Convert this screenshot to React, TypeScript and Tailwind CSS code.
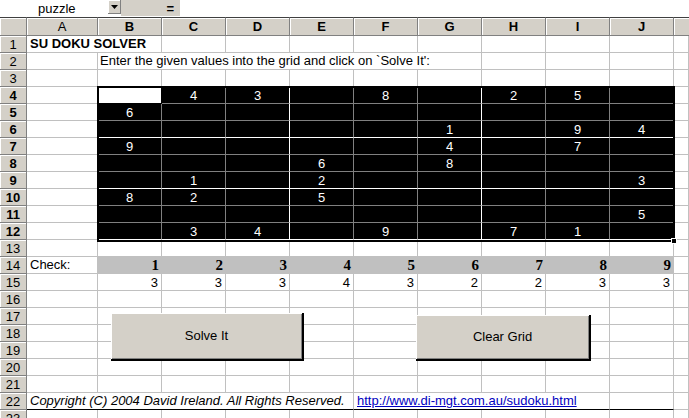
import React from 'react';

const font = "font-['Liberation_Sans',Arial,sans-serif]";
const colLetters = ['A', 'B', 'C', 'D', 'E', 'F', 'G', 'H', 'I', 'J'];

// rows 4..12, columns B..J
const puzzle = [
  ' 43 8 25 ',
  '6        ',
  '     1 94',
  '9    4 7 ',
  '   6 8   ',
  ' 1 2    3',
  '82 5     ',
  '        5',
  ' 34 9 71 ',
];
const checkCounts = [3, 3, 3, 4, 3, 2, 2, 3, 3];

const gridLine = 'border-r border-b border-[#c0c0c0]';

const RowHead = ({ n, bold }: { n: number; bold?: boolean }) => (
  <div
    className={`flex items-center justify-center bg-[#d4d0c8] border-r border-b border-[#808080] shadow-[inset_1px_1px_0_#fff] leading-none ${
      bold ? 'font-bold' : ''
    }`}
  >
    {n}
  </div>
);

const Blank = ({ extra = '' }: { extra?: string }) => <div className={`${gridLine} ${extra}`} />;

const blanks = (count: number, key: string) =>
  Array.from({ length: count }, (_, i) => <Blank key={`${key}-${i}`} />);

function SudokuCell({ r, c, v }: { r: number; c: number; v: string }) {
  const active = r === 0 && c === 0;
  const right = c === 2 || c === 5 || c === 8 ? 'border-r-white' : 'border-r-[#808080]';
  const bottom = r === 2 || r === 5 || r === 8 ? 'border-b-white' : 'border-b-[#808080]';
  if (active) {
    return <div className="bg-white border-r border-b border-r-black border-b-black" />;
  }
  return (
    <div className={`flex items-center justify-center bg-black text-white border-r border-b ${right} ${bottom} leading-none`}>
      {v.trim()}
    </div>
  );
}

function Button({ label, className }: { label: string; className: string }) {
  return (
    <div
      className={`absolute flex items-center justify-center bg-[#d4d0c8] text-black border-r-2 border-b-2 border-r-black border-b-black shadow-[inset_1px_1px_0_#fff,inset_-1px_-1px_0_#808080] ${className}`}
    >
      {label}
    </div>
  );
}

export default function App() {
  const rows: React.ReactNode[] = [];

  // column header row
  rows.push(
    <div key="corner" className="bg-[#d4d0c8] border-t border-t-[#404040] border-r border-b border-r-[#808080] border-b-[#808080] shadow-[inset_1px_1px_0_#fff]" />
  );
  colLetters.forEach((l, i) => {
    rows.push(
      <div
        key={`h-${l}`}
        className={`flex items-center justify-center bg-[#d4d0c8] border-t border-t-[#404040] border-r border-b border-r-[#808080] border-b-[#808080] shadow-[inset_1px_1px_0_#fff] leading-none ${
          i > 0 ? 'font-bold' : ''
        }`}
      >
        {l}
      </div>
    );
  });
  rows.push(
    <div key="h-K" className="bg-[#d4d0c8] border-t border-t-[#404040] border-b border-b-[#808080] shadow-[inset_1px_1px_0_#fff]" />
  );

  for (let r = 1; r <= 23; r++) {
    const bold = r >= 4 && r <= 12;
    rows.push(<RowHead key={`rh-${r}`} n={r} bold={bold} />);

    if (r === 1) {
      rows.push(
        <div key="title" className={`col-span-2 flex items-center pl-[3px] font-bold whitespace-nowrap ${gridLine}`}>
          SU DOKU SOLVER
        </div>
      );
      rows.push(...blanks(9, `r${r}`));
    } else if (r === 2) {
      rows.push(<Blank key="r2a" />);
      rows.push(
        <div key="intro" className={`col-span-6 flex items-center pl-[2px] whitespace-nowrap ${gridLine}`}>
          Enter the given values into the grid and click on `Solve It':
        </div>
      );
      rows.push(...blanks(4, `r${r}`));
    } else if (r >= 4 && r <= 12) {
      const line = puzzle[r - 4];
      rows.push(<Blank key={`r${r}a`} />);
      line.split('').forEach((v, c) => {
        rows.push(<SudokuCell key={`s${r}-${c}`} r={r - 4} c={c} v={v} />);
      });
      rows.push(<Blank key={`r${r}k`} />);
    } else if (r === 14) {
      rows.push(
        <div key="check" className={`flex items-center pl-[3px] ${gridLine}`}>
          Check:
        </div>
      );
      for (let i = 1; i <= 9; i++) {
        rows.push(
          <div
            key={`c${i}`}
            className="flex items-center justify-end pr-[3px] bg-[#c0c0c0] border-b border-[#c0c0c0] font-['Liberation_Serif',serif] text-[15px] font-bold leading-none"
          >
            {i}
          </div>
        );
      }
      rows.push(<Blank key="r14k" />);
    } else if (r === 15) {
      rows.push(<Blank key="r15a" />);
      checkCounts.forEach((n, i) => {
        rows.push(
          <div key={`n${i}`} className={`flex items-center justify-end pr-[3px] leading-none ${gridLine}`}>
            {n}
          </div>
        );
      });
      rows.push(<Blank key="r15k" />);
    } else if (r === 22) {
      rows.push(
        <div key="copy" className="col-span-5 flex items-center pl-[3px] italic whitespace-nowrap border-r border-r-[#c0c0c0] border-b border-b-black">
          Copyright (C) 2004 David Ireland. All Rights Reserved.
        </div>
      );
      rows.push(
        <div key="link" className="col-span-4 flex items-center pl-[3px] whitespace-nowrap border-r border-r-[#c0c0c0] border-b border-b-black">
          <span className="text-[#0000c0] underline">http://www.di-mgt.com.au/sudoku.html</span>
        </div>
      );
      rows.push(<div key="r22j" className="border-r border-r-[#c0c0c0] border-b border-b-black" />);
      rows.push(<Blank key="r22k" />);
    } else {
      rows.push(...blanks(11, `r${r}`));
    }
  }

  return (
    <div className={`relative w-[689px] h-[418px] overflow-hidden bg-white text-[13px] text-black ${font}`}>
      {/* formula bar */}
      <div className="flex h-[17px] items-start">
        <div className="w-[108px] h-[16px] flex items-center pl-[38px] leading-none">puzzle</div>
        <div className="w-[13px] h-[14px] flex items-center justify-center bg-[#d4d0c8] border-r border-b border-[#808080] shadow-[inset_1px_1px_0_#fff]">
          <svg width="7" height="4" viewBox="0 0 7 4">
            <path d="M0 0h7L3.5 4z" fill="#000" />
          </svg>
        </div>
        <div className="w-[59px] h-[16px] flex items-center justify-end pr-[6px] bg-[#d4d0c8] font-bold leading-none">
          =
        </div>
        <div className="flex-1 h-[16px] bg-white" />
      </div>

      {/* sheet */}
      <div className="grid grid-cols-[27px_71px_repeat(9,64px)_15px] grid-rows-[19px_repeat(23,17px)]">{rows}</div>

      {/* selection B4:J12 */}
      <div className="absolute left-[97px] top-[86px] w-[578px] h-[156px] border-2 border-black pointer-events-none" />
      <div className="absolute left-[671px] top-[238px] w-[6px] h-[6px] bg-black border border-white" />

      <Button label="Solve It" className="left-[111px] top-[313px] w-[193px] h-[48px]" />
      <Button label="Clear Grid" className="left-[416px] top-[315px] w-[175px] h-[46px]" />
    </div>
  );
}
